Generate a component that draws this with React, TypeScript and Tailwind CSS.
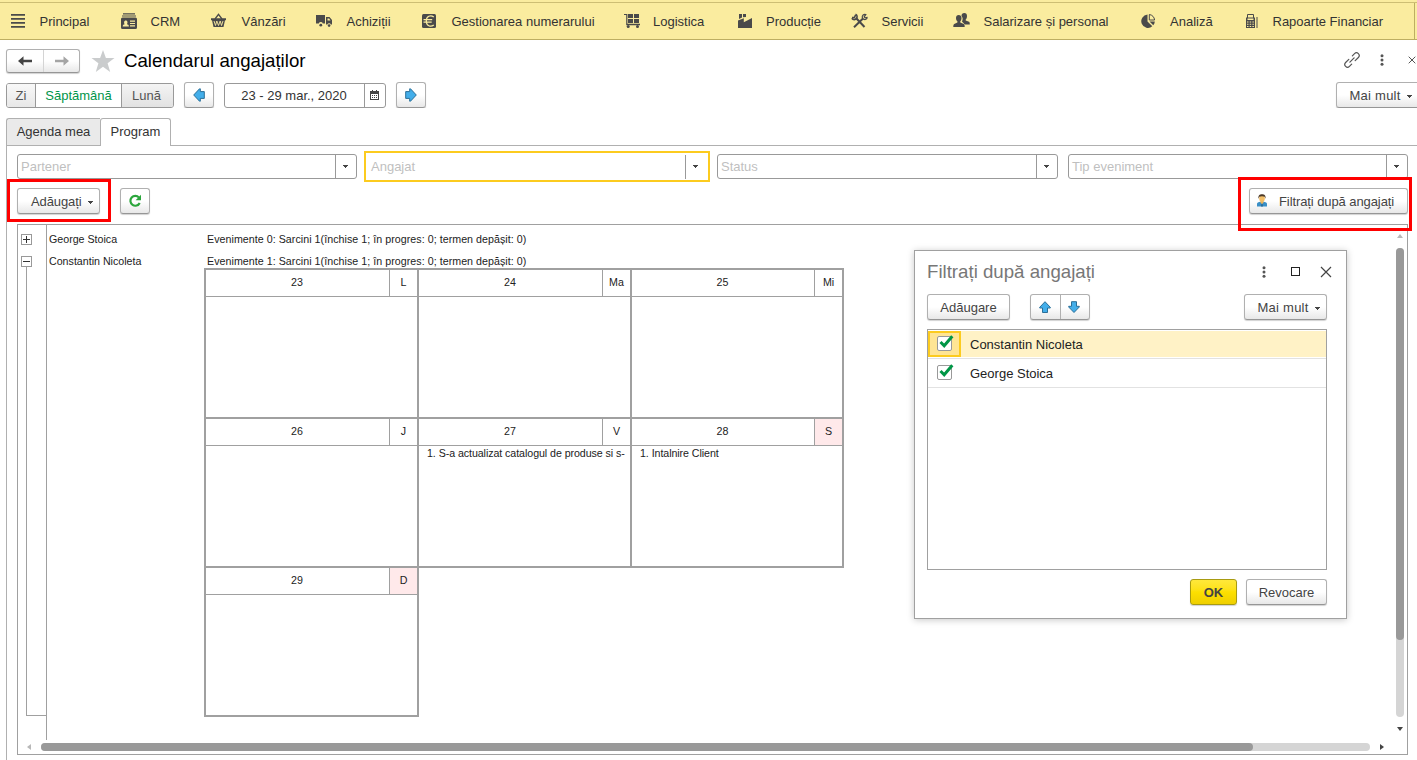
import type { ReactNode } from 'react'
import clsx from 'clsx'

const BTN =
  'flex items-center rounded-[3px] border border-[#b0b0b0] border-b-[#969696] bg-gradient-to-b from-white from-50% to-[#e8e8e8] text-[#444] shadow-[0_1px_1px_rgba(0,0,0,0.18)]'

const TEXT_BTN = clsx(BTN, 'pt-[2px]')

function Caret({ className }: { className?: string }) {
  return (
    <svg width="5" height="3" viewBox="0 0 5 3" className={clsx('shrink-0', className)} shapeRendering="crispEdges">
      <path d="M0 0h5v1H4v1H3v1H2V2H1V1H0z" fill="#444" />
    </svg>
  )
}

const ARROWS = {
  up: 'M6 .7 11.300 6.300v.7H8.500v4.500h-5V7H.7v-.7z',
  down: 'M6 11.500 11.300 6v-.7H8.500V.7h-5v4.600H.7V6z',
  left: 'M.7 7 6.500.8h.8v2.800h4v6.800h-4v2.800h-.8z',
  right: 'M11.300 7 5.500.8h-.8v2.800h-4v6.800h4v2.800h.8z',
}

function BlueArrow({ dir }: { dir: keyof typeof ARROWS }) {
  const height = dir === 'up' || dir === 'down' ? 12 : 14
  return (
    <svg width="12" height={height} viewBox={`0 0 12 ${height}`}>
      <path d={ARROWS[dir]} fill="#43aeea" stroke="#2b6f98" strokeLinejoin="round" />
    </svg>
  )
}

function Dots() {
  return (
    <svg width="4" height="12" viewBox="0 0 4 12" fill="#555">
      <circle cx="2" cy="1.700" r="1.500" />
      <circle cx="2" cy="6" r="1.500" />
      <circle cx="2" cy="10.300" r="1.500" />
    </svg>
  )
}

function NavIcon({ children }: { children: ReactNode }) {
  return (
    <span className="w-[30.500px] shrink-0">
      <svg width="18" height="16" viewBox="0 0 18 16" fill="#4a4a4a">
        {children}
      </svg>
    </span>
  )
}

const NAV: { label: string; width: string; icon: ReactNode }[] = [
  {
    label: 'Principal',
    width: 'w-[111px]',
    icon: <path d="M2 1h14v1.700H2zM2 5h14v1.700H2zM2 9h14v1.700H2zM2 13h14v1.700H2z" />,
  },
  {
    label: 'CRM',
    width: 'w-[91px]',
    icon: (
      <>
        <path d="M3 .3h12v1.200H3zM2 2.400h14v1.200H2zM2.500 4.500h13A1.500 1.500 0 0 1 17 6v8.500a1.500 1.500 0 0 1-1.500 1.500h-13A1.500 1.500 0 0 1 1 14.500V6a1.500 1.500 0 0 1 1.500-1.500z" />
        <path d="M10 7.500h5v1.200h-5zM10 9.900h5v1.200h-5zM10 12.300h5v1.200h-5zM2.700 13.500c0-1.800 1-2 2-2.300C3.700 10 3.900 7.500 5.800 7.500s2.100 2.500 1.100 3.700c1 .3 2 .5 2 2.300z" fill="#faec9f" />
      </>
    ),
  },
  {
    label: 'Vânzări',
    width: 'w-[105px]',
    icon: (
      <>
        <path d="M4 6 7.500 1.400 11 6" fill="none" stroke="#4a4a4a" strokeWidth="1.300" />
        <path d="M0 5.300h15v1.900H0zM1 7.200h13L12.500 14h-10z" />
        <path d="m3 8 1.500 4.500L5.800 8l1.700 4.500L9.200 8l1.300 4.500L12 8" fill="none" stroke="#faec9f" strokeWidth=".9" />
      </>
    ),
  },
  {
    label: 'Achiziții',
    width: 'w-[105px]',
    icon: (
      <>
        <path d="M0 2h9v8.500H6.800a2.100 2.100 0 0 0-4 0H0zM10 4h3.500L16 7v4.500h-1.200a1.800 1.800 0 0 0-3.400 0H10z" />
        <path d="M11.500 5.500h1.700l1.300 2h-3z" fill="#faec9f" />
        <circle cx="4.800" cy="12.200" r="1.400" />
        <circle cx="13.100" cy="12.600" r="1.300" />
      </>
    ),
  },
  {
    label: 'Gestionarea numerarului',
    width: 'w-[201.500px]',
    icon: (
      <>
        <rect x="1" y="1" width="14" height="14" rx="1.500" />
        <path d="M12.800 4C9.500 1.500 5.300 3.200 5.300 8s4.200 6.500 7.500 4M2.500 6.700h8.700M2.500 9.200h8.200" fill="none" stroke="#faec9f" strokeWidth="1.300" />
      </>
    ),
  },
  {
    label: 'Logistica',
    width: 'w-[113px]',
    icon: (
      <>
        <path d="M1 1h3.400v9.800H17v1.500H3.200V2H1zM5 1h5v4H5zM11 1h5v4h-5zM5 6h5v4H5zM11 6h5v4h-5z" />
        <circle cx="5.200" cy="13.600" r="1.500" />
        <circle cx="14.500" cy="13.600" r="1.500" />
      </>
    ),
  },
  {
    label: 'Producție',
    width: 'w-[115.500px]',
    icon: <path d="M3 1h3v3.500L3 6zM7 1h3v3L7 4.300zM2 7.500l5.800-2.200v4L16 5v10H2z" />,
  },
  {
    label: 'Servicii',
    width: 'w-[102px]',
    icon: (
      <>
        <path d="M3 14.200 12 5.500M5 5l8.500 9" stroke="#4a4a4a" strokeWidth="2" />
        <path d="M.8 5.300C2 7 4.500 7 5.500 5.500S6.300 2 4.500 1.200M1 4.500h2.500L4.500 2" fill="none" stroke="#4a4a4a" strokeWidth="1.600" />
        <path d="M14.800 1.500c-2-.7-4 .8-3.500 3s3 2.800 4.500 1.200L16 4.500l-2 .3-.8-1z" fill="none" stroke="#4a4a4a" strokeWidth="1.200" />
      </>
    ),
  },
  {
    label: 'Salarizare și personal',
    width: 'w-[186.500px]',
    icon: (
      <>
        <path d="M8.500 3C8.500 1 9.500 0 11.300 0S14 1 14 3c0 1.800-.6 2.800-1.300 3.500v1l3.300 1.300c.6.300.8 1.200.8 2.700h-5L9 8.500c1-2 .8-4-.5-5.500z" />
        <path d="M3 5C3 3 4 2 5.700 2S8.500 3 8.500 5c0 1.500-.5 2.500-1.200 3.300v1.200l3.500 1.500c.7.300.9 1.500.9 3H.3c0-1.500.2-2.700.9-3l3.200-1.500V8.300C3.500 7.500 3 6.500 3 5z" />
      </>
    ),
  },
  {
    label: 'Analiză',
    width: 'w-[102.500px]',
    icon: (
      <>
        <path d="M7.500 1.500v7l4.800 4.800A6.700 6.700 0 1 1 7.500 1.500z" />
        <path d="M9.300 1.500c3 .4 5 2.600 5.300 5.500H9.300z" fill="none" stroke="#4a4a4a" strokeWidth="1" />
        <path d="M9.500 8.500h5.300a6 6 0 0 1-1.500 3.700z" />
      </>
    ),
  },
  {
    label: 'Rapoarte Financiar',
    width: 'w-[170px]',
    icon: (
      <>
        <path d="M5.500 5V1.500h6V5" fill="none" stroke="#4a4a4a" />
        <path d="M4 4.500h9V15H4zM14.500 4h1v11h-1z" />
        <path d="M5.500 5.500h6V7h-6zM5 8.500h1.500v1H5zM7.700 8.500h1.500v1H7.700zM10.400 8.500h1.500v1h-1.500zM5 10.700h1.500v1H5zM7.700 10.700h1.500v1H7.700zM10.400 10.700h1.500v1h-1.500zM5 12.900h1.500v1H5zM7.700 12.900h1.500v1H7.700zM10.400 12.900h1.500v1h-1.500z" fill="#faec9f" />
      </>
    ),
  },
]

function NavBar() {
  return (
    <nav className="h-10 shrink-0 border-b border-[#bdae62] bg-[#faec9f] pt-[2px]">
      <div className="flex h-[37px] items-center border-t border-[#cdbe74] pl-[9px] text-[#333]">
        {NAV.map((item) => (
          <div key={item.label} className={clsx('flex shrink-0 items-center', item.width)}>
            <NavIcon>{item.icon}</NavIcon>
            <span className="mt-[2px] whitespace-nowrap">{item.label}</span>
          </div>
        ))}
        <div className="ml-[1.500px] h-full w-px shrink-0 bg-[#bdae62]" />
      </div>
    </nav>
  )
}

function TitleRow() {
  return (
    <div className="mt-2 flex h-[25px] items-center pl-[6px]">
      <div className={clsx(BTN, 'h-[24px] w-[74px]')}>
        <div className="flex h-full w-[37px] items-center justify-center border-r border-[#d4d4d4]">
          <svg width="14" height="10" viewBox="0 0 14 10">
            <path d="M0 5l5.500-4.800v3.500H14v2.600H5.500v3.500z" fill="#444" />
          </svg>
        </div>
        <div className="flex flex-1 justify-center">
          <svg width="14" height="10" viewBox="0 0 14 10">
            <path d="M14 5L8.500.2v3.500H0v2.600h8.500v3.500z" fill="#a5a5a5" />
          </svg>
        </div>
      </div>
      <svg width="24" height="22" viewBox="0 0 24 22" className="ml-[10.500px]">
        <path d="M12 0l2.900 8.100H23.500l-6.900 5.200L19.200 22 12 16.800 4.800 22l2.600-8.700L.5 8.100h8.600z" fill="#cacccd" />
      </svg>
      <h1 className="ml-[9.500px] text-[18.670px] leading-6 text-black">Calendarul angajaților</h1>
      <div className="mb-[2px] ml-auto flex items-center">
        <svg width="16" height="16" viewBox="-8 -8 16 16" fill="none" stroke="#555" strokeWidth="1.200" strokeLinecap="round">
          <path
            d="M-1.800-2.700H-6.300a2.700 2.700 0 0 0 0 5.400H-3.200M1.800 2.700H6.300a2.700 2.700 0 0 0 0-5.400H3.200M-3 0H3"
            transform="rotate(-45)"
          />
        </svg>
        <span className="ml-[20px]">
          <Dots />
        </span>
        <svg width="8" height="8" viewBox="0 0 8 8" className="mr-[1.500px] ml-[24px]">
          <path d="M.7.7l6.600 6.600M7.300.7.7 7.300" stroke="#555" strokeWidth="1" />
        </svg>
      </div>
    </div>
  )
}

function PeriodRow() {
  return (
    <div className="mt-[9px] flex h-[26px] items-center overflow-hidden pl-[6px]">
      <div className="mt-px flex h-[25px] w-[168px] overflow-hidden rounded-[3px] border border-[#999] text-[#555]">
        <span className="flex w-[29px] items-center justify-center border-r border-[#999] bg-gradient-to-b from-[#f8f8f8] to-[#e8e8e8] pt-px">Zi</span>
        <span className="flex w-[86px] items-center justify-center border-r border-[#999] bg-white pt-px text-[#00954a]">Săptămână</span>
        <span className="flex flex-1 items-center justify-center bg-gradient-to-b from-[#f4f4f4] to-[#e2e2e2] pt-px pr-[2px]">Lună</span>
      </div>
      <div className={clsx(BTN, 'ml-[10px] h-[26px] w-[30px] justify-center pb-px')}>
        <BlueArrow dir="left" />
      </div>
      <div className="mt-px ml-[10px] flex h-[25px] w-[162px] rounded-[3px] border border-[#999] bg-white text-[#333]">
        <span className="flex w-[140px] items-center justify-center border-r border-[#999] pt-px pr-px">23 - 29 mar., 2020</span>
        <span className="flex flex-1 items-center justify-center pr-[2px] pb-px">
          <svg width="9" height="10" viewBox="0 0 9 10" shapeRendering="crispEdges">
            <path d="M0 1h9v9H0z" fill="#444" />
            <path d="M2 0h1v2H2zM6 0h1v2H6z" fill="#444" />
            <path d="M1 4h7v5H1z" fill="#fff" />
            <path d="M2 5h1v1H2zM4 5h1v1H4zM6 5h1v1H6zM2 7h1v1H2zM4 7h1v1H4zM6 7h1v1H6z" fill="#444" />
          </svg>
        </span>
      </div>
      <div className={clsx(BTN, 'ml-[10px] h-[26px] w-[30px] justify-center pb-px')}>
        <BlueArrow dir="right" />
      </div>
      <div className={clsx(TEXT_BTN, 'mr-[-4px] ml-auto h-[26px] w-[85px] pl-[12.500px]')}>
        <span className="tracking-[0.250px]">Mai mult</span>
        <Caret className="mt-px ml-[6px]" />
      </div>
    </div>
  )
}

function Tabs() {
  return (
    <div className="mt-[10px] flex h-[28px] shrink-0 pl-[6px]">
      <div className="flex w-[94px] items-center justify-center rounded-tl-[3px] border border-r-0 border-[#b0b0b0] bg-[#eaeaea] text-[#333]">
        Agenda mea
      </div>
      <div className="flex w-[71px] items-center justify-center rounded-t-[3px] border border-b-0 border-[#b0b0b0] bg-white pb-px text-[#333]">
        Program
      </div>
      <div className="flex-1 border-b border-[#b0b0b0]" />
    </div>
  )
}

function FilterField({ label, className, focused }: { label: string; className: string; focused?: boolean }) {
  return (
    <div
      className={clsx(
        'flex items-center text-[#bfbfbf]',
        focused ? 'h-[31px] border-2 border-[#fccb1f] pl-[5px]' : 'h-[25px] rounded-[3px] border border-[#999] pl-[3px]',
        className,
      )}
    >
      <span className="flex-1">{label}</span>
      <span
        className={clsx(
          'flex items-center justify-center border-l border-[#999]',
          focused ? 'h-[24px] w-[23px] pr-[4px]' : 'h-full w-[21px] pr-[2px]',
        )}
      >
        <Caret />
      </span>
    </div>
  )
}

function Filters() {
  return (
    <div className="mt-[5px] flex h-[31px] items-center pl-[10px]">
      <FilterField label="Partener" className="w-[340px]" />
      <FilterField label="Angajat" className="ml-[7px] w-[346px]" focused />
      <FilterField label="Status" className="ml-[7px] w-[341px]" />
      <FilterField label="Tip eveniment" className="ml-[10px] w-[340px]" />
    </div>
  )
}

function ActionRow() {
  return (
    <div className="mt-[6px] flex h-[26px] items-center pr-[9px] pl-[10px]">
      <div className={clsx(TEXT_BTN, 'h-[26px] w-[83px] pl-[13px]')}>
        <span className="tracking-[-0.100px]">Adăugați</span>
        <Caret className="mt-px ml-[6px]" />
      </div>
      <div className={clsx(BTN, 'ml-[20px] h-[26px] w-[30px] justify-center')}>
        <svg width="14" height="14" viewBox="0 0 14 14">
          <path d="M11 3.600A4.900 4.900 0 1 0 11.700 9" fill="none" stroke="#2ba63c" strokeWidth="2.200" />
          <path d="M13 .8v5.400H7.600z" fill="#2ba63c" />
        </svg>
      </div>
      <div className={clsx(TEXT_BTN, 'ml-auto h-[26px] w-[159px] pl-[7px]')}>
        <svg width="10" height="13" viewBox="0 0 10 13" className="mb-[4px]">
          <path d="M0 12.500V9.800C0 8.500 1.500 8 3.300 7.700h3.400C8.500 8 10 8.500 10 9.800v2.700z" fill="#3a8fc6" />
          <path d="M3.500 6.500h3v2L5 10.300 3.500 8.500z" fill="#e8b25a" />
          <ellipse cx="5" cy="4.500" rx="2.800" ry="3.200" fill="#f3bf68" />
          <path d="M1.500 4.800C.9 1.600 2.600.2 5 .2s4.100 1.400 3.500 4.600L7.700 2.800C6.500 1.900 3.500 1.900 2.300 2.800z" fill="#4d3a28" />
          <path d="M4.500 10h1l.4 2.500H4.100z" fill="#27638e" />
        </svg>
        <span className="ml-[12px] tracking-[-0.090px]">Filtrați după angajați</span>
      </div>
    </div>
  )
}

const DAYS = [
  { day: 23, name: 'L' },
  { day: 24, name: 'Ma' },
  { day: 25, name: 'Mi' },
  { day: 26, name: 'J' },
  { day: 27, name: 'V', event: '1. S-a actualizat catalogul de produse si s-' },
  { day: 28, name: 'S', event: '1. Intalnire Client', weekend: true },
  { day: 29, name: 'D', weekend: true },
]

function WeekGrid() {
  return (
    <div className="grid w-[638px] grid-cols-[213px_213px_212px] auto-rows-[149px]">
      {DAYS.map((d) => (
        <div key={d.day} className="-mr-[2px] -mb-[2px] border-2 border-[#a0a0a0]">
          <div className="flex h-[27px] border-b border-[#a0a0a0] text-center leading-[25px]">
            <span className="flex-1 pr-px">{d.day}</span>
            <span className={clsx('w-[28px] border-l border-[#a0a0a0]', d.weekend && 'bg-[#ffe9ea]')}>{d.name}</span>
          </div>
          {d.event && <p className="pl-[8px] leading-[15px] tracking-[-0.070px] whitespace-nowrap">{d.event}</p>}
        </div>
      ))}
    </div>
  )
}

function ExpandBox({ open }: { open?: boolean }) {
  return (
    <svg width="11" height="11" viewBox="0 0 11 11" className="block" shapeRendering="crispEdges">
      <rect x="0.500" y="0.500" width="10" height="10" fill="#fff" stroke="#999" />
      <path d={open ? 'M2 5h7v1H2z' : 'M2 5h7v1H2zM5 2h1v7H5z'} fill="#333" />
    </svg>
  )
}

function ScheduleTree() {
  return (
    <div className="flex w-[29px] shrink-0 flex-col border-r border-[#a0a0a0] pt-[9px] pl-[3px]">
      <ExpandBox />
      <div className="h-[11px]" />
      <ExpandBox open />
      <div className="ml-[5px] h-[449px] border-b border-l border-[#a0a0a0]" />
    </div>
  )
}

function Schedule() {
  return (
    <div className="mt-[10px] ml-[10px] flex h-[531px] w-[1391px] flex-col border border-[#a0a0a0] text-[10.670px] text-[#222]">
      <div className="flex h-[515px]">
        <ScheduleTree />
        <div className="flex-1 pt-[3px]">
          <div className="flex h-[22px] pl-[2px] leading-[22px]">
            <span className="w-[158px]">George Stoica</span>
            <span className="tracking-[0.045px]">Evenimente 0: Sarcini 1(închise 1; în progres: 0; termen depășit: 0)</span>
          </div>
          <div className="flex h-[18px] pl-[2px] leading-[23px]">
            <span className="w-[158px]">Constantin Nicoleta</span>
            <span className="tracking-[0.045px]">Evenimente 1: Sarcini 1(închise 1; în progres: 0; termen depășit: 0)</span>
          </div>
          <div className="pl-[157px]">
            <WeekGrid />
          </div>
        </div>
        <div className="mr-[3px] flex w-[8px] flex-col items-center pt-[9px]">
          <svg width="6" height="4" viewBox="0 0 6 4">
            <path d="M3 0l3 4H0z" fill="#b8b8b8" />
          </svg>
          <div className="mt-[10px] h-[469px] w-[8px] rounded-full bg-[#d5d5d5]">
            <div className="h-[392px] rounded-full bg-[#999]" />
          </div>
          <svg width="6" height="4" viewBox="0 0 6 4" className="mt-[10px]">
            <path d="M3 4l3-4H0z" fill="#444" />
          </svg>
        </div>
      </div>
      <div className="flex flex-1 items-center pl-[9px]">
        <svg width="4" height="6" viewBox="0 0 4 6">
          <path d="M0 3l4-3v6z" fill="#b8b8b8" />
        </svg>
        <div className="ml-[10px] h-[8px] w-[1329px] rounded-full bg-[#d5d5d5]">
          <div className="h-full w-[1212px] rounded-full bg-[#999]" />
        </div>
        <svg width="4" height="6" viewBox="0 0 4 6" className="ml-[10px]">
          <path d="M4 3L0 0v6z" fill="#444" />
        </svg>
      </div>
    </div>
  )
}

function EmployeeRow({ name, selected }: { name: string; selected?: boolean }) {
  return (
    <div className={clsx('border-b border-[#e2e2e2]', selected ? 'h-[28px]' : 'h-[29px] pt-px')}>
      <div className={clsx('flex h-[26px] items-center', selected && 'bg-[#fff2c6]')}>
        <div
          className={clsx(
            'flex h-[26px] w-[33px] items-center border-2 pl-[7px]',
            selected ? 'border-[#fccb1f] bg-[#ffe594]' : 'border-transparent',
          )}
        >
          <svg width="18" height="17" viewBox="0 0 18 17" className="mb-[2px]">
            <rect x="0.500" y="1.500" width="14" height="14" rx="1.500" fill="#fff" stroke="#999" />
            <path d="M3.500 7 7.200 10.800 15.300 1.300" fill="none" stroke="#009646" strokeWidth="3" />
          </svg>
        </div>
        <span className="pt-px pl-[9px] text-[#222]">{name}</span>
      </div>
    </div>
  )
}

function FilterDialog() {
  return (
    <div className="absolute top-[250px] left-[914px] h-[369px] w-[433px] border border-[#a0a0a0] bg-white px-[12px] shadow-[0_1px_7px_rgba(0,0,0,0.22)]">
      <div className="mt-[9px] flex h-[24px] items-center pr-[9px]">
        <h2 className="flex-1 text-[18.670px] text-[#777]">Filtrați după angajați</h2>
        <div className="mb-px flex items-center">
          <Dots />
          <div className="ml-[25px] h-[9px] w-[9px] border border-[#222]" />
          <svg width="12" height="12" viewBox="0 0 12 12" className="mr-[-7px] ml-[20px]">
            <path d="M1 1l10 10M11 1 1 11" stroke="#444" strokeWidth="1.200" />
          </svg>
        </div>
      </div>
      <div className="mt-[10px] flex h-[26px]">
        <div className={clsx(TEXT_BTN, 'w-[83px] justify-center')}>Adăugare</div>
        <div className={clsx(BTN, 'ml-[20px] w-[60px]')}>
          <span className="flex h-full w-[30px] items-center justify-center border-r border-[#b0b0b0] pr-[2px]">
            <BlueArrow dir="up" />
          </span>
          <span className="flex flex-1 justify-center pr-[3px]">
            <BlueArrow dir="down" />
          </span>
        </div>
        <div className={clsx(TEXT_BTN, 'mr-[7px] ml-auto w-[83px] pl-[12.500px]')}>
          <span className="tracking-[0.250px]">Mai mult</span>
          <Caret className="mt-px ml-[6px]" />
        </div>
      </div>
      <div className="mt-[9px] h-[241px] w-[400px] border border-[#a0a0a0] pt-px">
        <EmployeeRow name="Constantin Nicoleta" selected />
        <EmployeeRow name="George Stoica" />
      </div>
      <div className="mt-[9px] mr-[7px] flex h-[26px] justify-end">
        <div className="flex w-[47px] items-center justify-center rounded-[3px] border border-[#a89b12] bg-gradient-to-b from-[#ffe83a] via-[#fde000] to-[#efcf00] pt-[2px] font-bold text-[#444] shadow-[0_1px_1px_rgba(0,0,0,0.18)]">
          OK
        </div>
        <div className={clsx(TEXT_BTN, 'ml-[9px] w-[81px] justify-center')}>Revocare</div>
      </div>
    </div>
  )
}

export default function App() {
  return (
    <div className="relative flex h-[760px] w-[1417px] flex-col overflow-hidden bg-white font-['Liberation_Sans',Arial,sans-serif] text-[13px] leading-4">
      <NavBar />
      <TitleRow />
      <PeriodRow />
      <Tabs />
      <div className="ml-[6px] flex-1 border-l border-[#b0b0b0]">
        <Filters />
        <ActionRow />
        <Schedule />
      </div>

      {/* Highlight frames around the two action buttons */}
      <div className="absolute top-[179px] left-[7px] h-[43px] w-[104px] border-3 border-[#ff0000]" />
      <div className="absolute top-[177px] left-[1238px] h-[54px] w-[174px] border-3 border-[#ff0000]" />

      <FilterDialog />
    </div>
  )
}
